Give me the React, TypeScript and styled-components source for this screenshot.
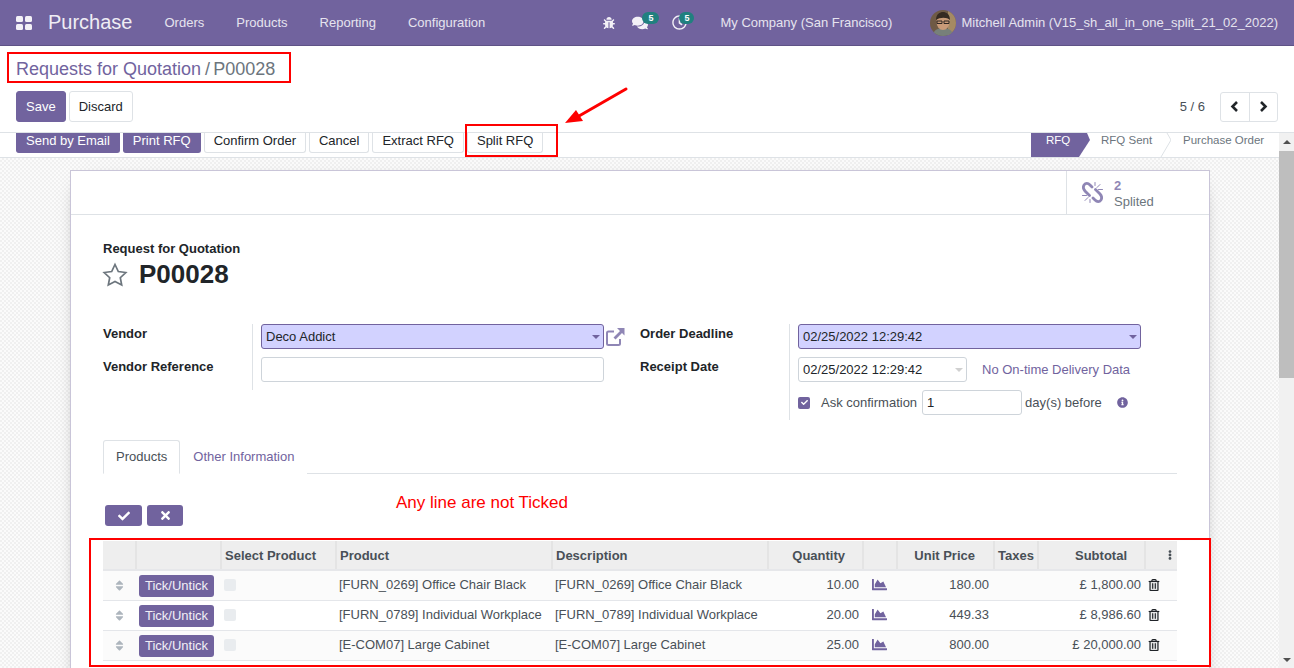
import * as React from 'react';
import styled, { createGlobalStyle } from 'styled-components';
import {
  FaBug,
  FaCheck,
  FaChartArea,
  FaComments,
  FaEllipsisV,
  FaInfoCircle,
  FaRegClock,
  FaRegTrashAlt,
  FaSort,
  FaTimes,
} from 'react-icons/fa';

const purple = '#71639e';

const GlobalStyle = createGlobalStyle`
  html, body {
    margin: 0;
    height: 100%;
    overflow: hidden;
  }
  body {
    font-family: "Liberation Sans", Arial, sans-serif;
    font-size: 13px;
    color: #212529;
  }
  * {
    box-sizing: border-box;
  }
`;

const Page = styled.div`
  position: relative;
  width: 1294px;
  height: 668px;
  display: flex;
  flex-direction: column;
  overflow: hidden;
`;

const NavBar = styled.header`
  flex: none;
  height: 46px;
  display: flex;
  align-items: center;
  background: ${purple};
  border-bottom: 1px solid #5f5386;
  color: #fff;
  padding-left: 16px;
  padding-right: 16px;
`;

const AppGrid = styled.div`
  display: grid;
  grid-template-columns: 7px 7px;
  grid-auto-rows: 6px;
  gap: 2px;
  margin-right: 16px;
  span {
    background: #f3f1f7;
    border-radius: 1.5px;
  }
`;

const Brand = styled.span`
  font-size: 20px;
  color: #efedf4;
  margin-right: 32px;
`;

const NavLink = styled.span`
  color: #e6e3ef;
  margin-right: 32px;
`;

const NavRight = styled.div`
  margin-left: auto;
  display: flex;
  align-items: center;
  color: #e6e3ef;
`;

const NavIcon = styled.span<{ $w: number }>`
  position: relative;
  width: ${(p) => p.$w}px;
  height: 16px;
  display: flex;
  align-items: center;
  color: #f3f1f7;
`;

const Badge = styled.span<{ $left: number; $w: number }>`
  position: absolute;
  top: -3px;
  left: ${(p) => p.$left}px;
  width: ${(p) => p.$w}px;
  height: 12px;
  border-radius: 6px;
  background: #21807f;
  color: #fff;
  font-size: 9px;
  font-weight: 700;
  text-align: center;
  line-height: 12px;
`;

const Company = styled.span`
  margin-right: 38px;
`;

const Avatar = styled.svg`
  width: 26px;
  height: 26px;
  border-radius: 50%;
  margin-right: 5px;
`;

const ControlPanel = styled.div`
  flex: none;
  height: 87px;
  background: #fff;
  border-bottom: 1px solid #dee2e6;
  padding: 11px 16px 0;
`;

const Breadcrumb = styled.div`
  font-size: 18px;
  line-height: 24px;
  height: 34px;
  color: ${purple};
  span {
    color: #6c757d;
  }
  i {
    font-style: normal;
    color: #6c757d;
    padding: 0 3px 0 4px;
  }
`;

const PanelRow = styled.div`
  display: flex;
  align-items: center;
`;

const Button = styled.button<{ $primary?: boolean }>`
  font: inherit;
  height: 31px;
  padding: 0 9px;
  border-radius: 3px;
  border: 1px solid ${(p) => (p.$primary ? purple : '#dee2e6')};
  background: ${(p) => (p.$primary ? purple : '#fff')};
  color: ${(p) => (p.$primary ? '#fff' : '#212529')};
  margin-right: 3px;
  white-space: nowrap;
`;

const PagerValue = styled.span`
  margin-left: auto;
  margin-right: 15px;
  color: #495057;
`;

const Pager = styled.div`
  display: flex;
  width: 58px;
  height: 30px;
  border: 1px solid #dee2e6;
  border-radius: 3px;
  color: #212529;
  span {
    flex: 1;
    display: flex;
    align-items: center;
    justify-content: center;
  }
  span + span {
    border-left: 1px solid #dee2e6;
  }
`;

const Chevron = styled.svg`
  width: 9px;
  height: 11px;
`;

const Body = styled.div`
  flex: 1;
  min-height: 0;
  display: flex;
`;

const MainColumn = styled.div`
  flex: 1;
  min-width: 0;
  display: flex;
  flex-direction: column;
`;

const StatusBar = styled.div`
  flex: none;
  height: 25px;
  display: flex;
  background: #fff;
  border-bottom: 1px solid #dee2e6;
  padding-left: 16px;
`;

const ActionButton = styled(Button)`
  height: 20px;
  border-top: 0;
  border-radius: 0 0 3px 3px;
  padding: 0 9px 6px;
  margin-right: 3px;
`;

const Steps = styled.div`
  margin-left: auto;
  display: flex;
  height: 24px;
  width: 248px;
  font-size: 11.5px;
`;

const StepItem = styled.div<{ $active?: boolean; $w: number; $pad: number }>`
  position: relative;
  isolation: isolate;
  flex: none;
  width: ${(p) => p.$w}px;
  padding-left: ${(p) => p.$pad}px;
  line-height: 14px;
  color: ${(p) => (p.$active ? '#fff' : '#6c757d')};
`;

const StepShape = styled.svg`
  position: absolute;
  top: 0;
  left: 0;
  width: 100%;
  height: 24px;
  z-index: -1;
`;

const Scroller = styled.main`
  flex: 1;
  min-height: 0;
  padding: 12px 0 0 70px;
  overflow: hidden;
  background-color: #f9f9f9;
  background-image: repeating-conic-gradient(#f0f0f0 0 25%, #fbfbfb 0 50%);
  background-size: 4px 4px;
`;

const ScrollBar = styled.div`
  flex: none;
  width: 15px;
  background: #f1f1f1;
  display: flex;
  flex-direction: column;
  align-items: center;
`;

const ScrollArrow = styled.div<{ $down?: boolean }>`
  flex: none;
  height: 17px;
  display: flex;
  align-items: center;
  justify-content: center;
  &::before {
    content: '';
    border-left: 4px solid transparent;
    border-right: 4px solid transparent;
    ${(p) => (p.$down ? 'border-top: 4px solid #505050;' : 'border-bottom: 4px solid #505050;')}
  }
`;

const ScrollThumb = styled.div`
  flex: none;
  width: 100%;
  height: 227px;
  margin-top: 1px;
  background: #bebebe;
`;

const ScrollSpace = styled.div`
  flex: 1;
`;

const Sheet = styled.section`
  width: 1140px;
  min-height: 560px;
  background: #fff;
  border: 1px solid #c9c5d8;
  box-shadow: 0 5px 20px -15px #000;
`;

const ButtonBox = styled.div`
  height: 44px;
  display: flex;
  justify-content: flex-end;
  border-bottom: 1px solid #dee2e6;
`;

const StatButton = styled.div`
  width: 143px;
  display: flex;
  align-items: center;
  padding-left: 15px;
  border-left: 1px solid #dee2e6;
  color: #8f86b5;
  line-height: 16px;
  b {
    display: block;
  }
  span {
    color: #6c757d;
  }
`;

const StatIcon = styled.svg`
  flex: none;
  width: 21px;
  height: 21px;
`;

const StatText = styled.div`
  margin-left: 11px;
  padding-top: 2px;
`;

const SheetBody = styled.div`
  padding: 26px 32px 0 32px;
`;

const TitleLabel = styled.div`
  font-weight: 700;
  line-height: 16px;
`;

const TitleRow = styled.div`
  display: flex;
  align-items: center;
  height: 33px;
  margin-top: 1px;
`;

const Star = styled.svg`
  width: 24px;
  height: 24px;
  overflow: visible;
`;

const TitleText = styled.h1`
  margin: 0 0 0 12px;
  font-size: 26px;
  font-weight: 700;
  color: #212529;
`;

const FormGrid = styled.div`
  display: flex;
  align-items: flex-start;
  margin-top: 33px;
`;

const FormLabels = styled.div<{ $w: number }>`
  width: ${(p) => p.$w}px;
  flex: none;
  font-weight: 700;
  div {
    height: 33px;
    line-height: 19px;
  }
`;

const FormFields = styled.div<{ $w: number; $bottom: number }>`
  width: ${(p) => p.$w}px;
  flex: none;
  border-left: 1px solid #dee2e6;
  padding: 0 0 ${(p) => p.$bottom}px 8px;
  display: flex;
  flex-direction: column;
  gap: 8px;
`;

const FieldRow = styled.div`
  display: flex;
  align-items: center;
`;

const Input = styled.div<{ $required?: boolean; $w: number; $caret?: boolean }>`
  position: relative;
  width: ${(p) => p.$w}px;
  height: 25px;
  line-height: 23px;
  padding-left: 4px;
  border-radius: 3px;
  border: 1px solid ${(p) => (p.$required ? purple : '#ced4da')};
  background: ${(p) => (p.$required ? '#d2d2ff' : '#fff')};
  &::after {
    content: ${(p) => (p.$caret ? "''" : 'none')};
    position: absolute;
    right: 3px;
    top: 10px;
    border-left: 4px solid transparent;
    border-right: 4px solid transparent;
    border-top: 4px solid ${(p) => (p.$required ? '#71639e' : '#d0d0d0')};
  }
`;

const LinkIcon = styled.svg`
  width: 20px;
  height: 20px;
  margin-left: 1px;
  color: #8f86b5;
`;

const DeliveryLink = styled.span`
  margin-left: 15px;
  color: ${purple};
`;

const CheckBox = styled.span`
  width: 12px;
  height: 12px;
  border-radius: 2px;
  background: ${purple};
  color: #fff;
  display: flex;
  align-items: center;
  justify-content: center;
  font-size: 7px;
`;

const AskLabel = styled.span`
  margin-left: 11px;
  margin-right: 5px;
  color: #495057;
`;

const DaysLabel = styled.span`
  margin-left: 3px;
  color: #495057;
`;

const InfoIcon = styled.span`
  margin-left: 15px;
  color: ${purple};
  display: flex;
  font-size: 11px;
`;

const Tabs = styled.nav`
  display: flex;
  height: 34px;
  margin-top: 20px;
  border-bottom: 1px solid #dee2e6;
`;

const Tab = styled.div<{ $active?: boolean }>`
  height: 34px;
  padding: 0 12px;
  line-height: 32px;
  color: ${(p) => (p.$active ? '#495057' : purple)};
  background: #fff;
  border: 1px solid ${(p) => (p.$active ? '#dee2e6' : 'transparent')};
  border-bottom: 1px solid ${(p) => (p.$active ? '#fff' : 'transparent')};
  border-radius: 3px 3px 0 0;
`;

const LineTools = styled.div`
  display: flex;
  gap: 5px;
  margin-top: 31px;
  margin-left: 2px;
`;

const ToolButton = styled.span<{ $w: number }>`
  width: ${(p) => p.$w}px;
  height: 21px;
  border-radius: 3px;
  background: ${purple};
  color: #fff;
  font-size: 12px;
  display: flex;
  align-items: center;
  justify-content: center;
`;

const Lines = styled.table`
  width: 1074px;
  margin-top: 15px;
  border-collapse: collapse;
  table-layout: fixed;
`;

const Th = styled.th<{ $right?: boolean; $pad?: number }>`
  height: 29px;
  padding: 0 ${(p) => p.$pad ?? 3}px 0 3px;
  background: #eeeeee;
  border-bottom: 2px solid #e6e7ea;
  border-right: 2px solid #e4e4e4;
  text-align: ${(p) => (p.$right ? 'right' : 'left')};
  color: #495057;
  font-weight: 700;
  white-space: nowrap;
  &:last-child {
    border-right: 0;
  }
`;

const Td = styled.td<{ $right?: boolean; $pad?: number; $top?: number }>`
  height: 30px;
  padding: ${(p) => p.$top ?? 6}px ${(p) => p.$pad ?? 3}px 0 3px;
  border-bottom: 1px solid #e4e6ea;
  text-align: ${(p) => (p.$right ? 'right' : 'left')};
  vertical-align: top;
  line-height: 15px;
  color: #495057;
  white-space: nowrap;
`;

const Row = styled.tr<{ $odd?: boolean }>`
  background: ${(p) => (p.$odd ? '#fbfbfb' : '#fff')};
`;

const Handle = styled.span`
  display: flex;
  justify-content: center;
  color: #adb5bd;
  font-size: 13px;
`;

const TickButton = styled.span`
  display: block;
  width: 75px;
  height: 22px;
  line-height: 22px;
  text-align: center;
  border-radius: 3px;
  background: ${purple};
  color: #f1eff6;
`;

const EmptyBox = styled.span`
  display: block;
  width: 12px;
  height: 12px;
  border-radius: 2px;
  background: #e9ecef;
`;

const ChartLink = styled.span`
  display: flex;
  color: ${purple};
  font-size: 15px;
  padding-left: 6px;
`;

const Trash = styled.span`
  display: flex;
  color: #212529;
  font-size: 12px;
`;

const RedBox = styled.div<{ $x: number; $y: number; $w: number; $h: number }>`
  position: absolute;
  left: ${(p) => p.$x}px;
  top: ${(p) => p.$y}px;
  width: ${(p) => p.$w}px;
  height: ${(p) => p.$h}px;
  border: 2px solid #fe0000;
  pointer-events: none;
`;

const Note = styled.div`
  position: absolute;
  left: 396px;
  top: 493px;
  font-size: 17px;
  line-height: 19px;
  color: #fe0000;
`;

const Arrow = styled.svg`
  position: absolute;
  left: 560px;
  top: 84px;
  width: 72px;
  height: 44px;
`;

const lines = [
  { code: '[FURN_0269] Office Chair Black', qty: '10.00', price: '180.00', total: '£ 1,800.00' },
  { code: '[FURN_0789] Individual Workplace', qty: '20.00', price: '449.33', total: '£ 8,986.60' },
  { code: '[E-COM07] Large Cabinet', qty: '25.00', price: '800.00', total: '£ 20,000.00' },
];

const colWidths = [33, 85, 115, 216, 216, 95, 34, 97, 44, 107, 32];

export default function App() {
  return (
    <Page>
      <GlobalStyle />
      <NavBar>
        <AppGrid>
          <span />
          <span />
          <span />
          <span />
        </AppGrid>
        <Brand>Purchase</Brand>
        <NavLink>Orders</NavLink>
        <NavLink>Products</NavLink>
        <NavLink>Reporting</NavLink>
        <NavLink>Configuration</NavLink>
        <NavRight>
          <NavIcon $w={29}>
            <FaBug size={12} />
          </NavIcon>
          <NavIcon $w={40}>
            <FaComments size={16} />
            <Badge $left={10} $w={17}>
              5
            </Badge>
          </NavIcon>
          <NavIcon $w={48}>
            <FaRegClock size={15} />
            <Badge $left={7} $w={15}>
              5
            </Badge>
          </NavIcon>
          <Company>My Company (San Francisco)</Company>
          <Avatar viewBox="0 0 26 26">
            <rect width="26" height="26" fill="#6f5a45" />
            <rect x="18" width="8" height="26" fill="#a58a63" />
            <path d="M3 26c0-6 5-8 10-8s10 2 10 8z" fill="#77807a" />
            <ellipse cx="13" cy="12" rx="6.5" ry="8" fill="#c89a78" />
            <path d="M6 10c0-6 4-8 7-8s7 2 7 8c-3-3-10-3-14 0z" fill="#352a22" />
            <path d="M7 11h5v2.5H7zM14 11h5v2.5h-5z" fill="none" stroke="#2d2622" strokeWidth="1" />
          </Avatar>
          <span>Mitchell Admin (V15_sh_all_in_one_split_21_02_2022)</span>
        </NavRight>
      </NavBar>

      <ControlPanel>
        <Breadcrumb>
          Requests for Quotation<i>/</i>
          <span>P00028</span>
        </Breadcrumb>
        <PanelRow>
          <Button $primary>Save</Button>
          <Button>Discard</Button>
          <PagerValue>5 / 6</PagerValue>
          <Pager>
            <span>
              <Chevron viewBox="0 0 9 11">
                <polyline points="7,1 2.5,5.5 7,10" fill="none" stroke="currentColor" strokeWidth="2.6" />
              </Chevron>
            </span>
            <span>
              <Chevron viewBox="0 0 9 11">
                <polyline points="2,1 6.5,5.5 2,10" fill="none" stroke="currentColor" strokeWidth="2.6" />
              </Chevron>
            </span>
          </Pager>
        </PanelRow>
      </ControlPanel>

      <Body>
        <MainColumn>
          <StatusBar>
            <ActionButton $primary>Send by Email</ActionButton>
            <ActionButton $primary>Print RFQ</ActionButton>
            <ActionButton>Confirm Order</ActionButton>
            <ActionButton>Cancel</ActionButton>
            <ActionButton>Extract RFQ</ActionButton>
            <ActionButton>Split RFQ</ActionButton>
            <Steps>
              <StepItem $active $w={59} $pad={15}>
                <StepShape viewBox="0 0 59 24">
                  <polygon points="0,0 56,0 59,7 48,24 0,24" fill={purple} />
                </StepShape>
                RFQ
              </StepItem>
              <StepItem $w={81} $pad={11}>
                <StepShape viewBox="0 0 81 24">
                  <polyline points="77,0 81,7 71,24" fill="none" stroke="#dee2e6" />
                </StepShape>
                RFQ Sent
              </StepItem>
              <StepItem $w={108} $pad={12}>
                Purchase Order
              </StepItem>
            </Steps>
          </StatusBar>
          <Scroller>
            <Sheet>
              <ButtonBox>
                <StatButton>
                  <StatIcon viewBox="0 0 21 21">
                    <g fill="none" stroke="currentColor" strokeLinecap="round">
                      <path
                        d="M10 5L8 3C6 1 3.5 1 2.2 2.8 1 4.6 1.2 7 3 9L7.5 13.5M11 16l2 2c2 2 4.5 2 5.8.2 1.2-1.8 1-4.2-.8-6.2L13.5 7.5"
                        strokeWidth="2.8"
                      />
                      <path
                        d="M13 3.5V.5M15 5.5l3-3M16.5 7.5H20.5M8 17.5v3M6 15.5l-3 3M4.5 13.5H.5"
                        strokeWidth="1"
                      />
                    </g>
                  </StatIcon>
                  <StatText>
                    <b>2</b>
                    <span>Splited</span>
                  </StatText>
                </StatButton>
              </ButtonBox>
              <SheetBody>
                <TitleLabel>Request for Quotation</TitleLabel>
                <TitleRow>
                  <Star viewBox="0 0 24 24">
                    <polygon
                      points="12,1.5 15.3,8.5 22.8,9.5 17.3,14.7 18.7,22 12,18.5 5.3,22 6.7,14.7 1.2,9.5 8.7,8.5"
                      fill="none"
                      stroke="#6c757d"
                      strokeWidth="1.7"
                    />
                  </Star>
                  <TitleText>P00028</TitleText>
                </TitleRow>
                <FormGrid>
                  <FormLabels $w={149}>
                    <div>Vendor</div>
                    <div>Vendor Reference</div>
                  </FormLabels>
                  <FormFields $w={388} $bottom={8}>
                    <FieldRow>
                      <Input $required $caret $w={343}>
                        Deco Addict
                      </Input>
                      <LinkIcon viewBox="0 0 20 20">
                        <path
                          d="M9 4.5H3.5A1.5 1.5 0 0 0 2 6v10.5A1.5 1.5 0 0 0 3.5 18h10a1.5 1.5 0 0 0 1.5-1.5V12"
                          fill="none"
                          stroke="currentColor"
                          strokeWidth="2"
                        />
                        <path d="M12 1h7.5v7.5l-2.5-2.5-6.5 6.5-2-2L15 4z" fill="currentColor" />
                      </LinkIcon>
                    </FieldRow>
                    <FieldRow>
                      <Input $w={343} />
                    </FieldRow>
                  </FormFields>
                  <FormLabels $w={149}>
                    <div>Order Deadline</div>
                    <div>Receipt Date</div>
                  </FormLabels>
                  <FormFields $w={360} $bottom={5}>
                    <FieldRow>
                      <Input $required $caret $w={343}>
                        02/25/2022 12:29:42
                      </Input>
                    </FieldRow>
                    <FieldRow>
                      <Input $caret $w={169}>
                        02/25/2022 12:29:42
                      </Input>
                      <DeliveryLink>No On-time Delivery Data</DeliveryLink>
                    </FieldRow>
                    <FieldRow>
                      <CheckBox>
                        <FaCheck />
                      </CheckBox>
                      <AskLabel>Ask confirmation</AskLabel>
                      <Input $w={100}>1</Input>
                      <DaysLabel>day(s) before</DaysLabel>
                      <InfoIcon>
                        <FaInfoCircle />
                      </InfoIcon>
                    </FieldRow>
                  </FormFields>
                </FormGrid>
                <Tabs>
                  <Tab $active>Products</Tab>
                  <Tab>Other Information</Tab>
                </Tabs>
                <LineTools>
                  <ToolButton $w={37}>
                    <FaCheck />
                  </ToolButton>
                  <ToolButton $w={36}>
                    <FaTimes size={13} />
                  </ToolButton>
                </LineTools>
                <Lines>
                  <colgroup>
                    {colWidths.map((w, i) => (
                      <col key={i} width={w} />
                    ))}
                  </colgroup>
                  <thead>
                    <tr>
                      <Th />
                      <Th />
                      <Th>Select Product</Th>
                      <Th>Product</Th>
                      <Th>Description</Th>
                      <Th $right $pad={17}>
                        Quantity
                      </Th>
                      <Th />
                      <Th $right $pad={18}>
                        Unit Price
                      </Th>
                      <Th>Taxes</Th>
                      <Th $right $pad={17}>
                        Subtotal
                      </Th>
                      <Th $right $pad={2}>
                        <FaEllipsisV size={10} />
                      </Th>
                    </tr>
                  </thead>
                  <tbody>
                    {lines.map((line, i) => (
                      <Row key={line.code} $odd={i !== 1}>
                        <Td $top={8}>
                          <Handle>
                            <FaSort />
                          </Handle>
                        </Td>
                        <Td $top={4}>
                          <TickButton>Tick/Untick</TickButton>
                        </Td>
                        <Td $top={8}>
                          <EmptyBox />
                        </Td>
                        <Td>{line.code}</Td>
                        <Td>{line.code}</Td>
                        <Td $right $pad={4}>
                          {line.qty}
                        </Td>
                        <Td>
                          <ChartLink>
                            <FaChartArea />
                          </ChartLink>
                        </Td>
                        <Td $right $pad={5}>
                          {line.price}
                        </Td>
                        <Td />
                        <Td $right $pad={4}>
                          {line.total}
                        </Td>
                        <Td $top={8}>
                          <Trash>
                            <FaRegTrashAlt stroke="currentColor" strokeWidth={8} />
                          </Trash>
                        </Td>
                      </Row>
                    ))}
                  </tbody>
                </Lines>
              </SheetBody>
            </Sheet>
          </Scroller>
        </MainColumn>
        <ScrollBar>
          <ScrollArrow />
          <ScrollThumb />
          <ScrollSpace />
          <ScrollArrow $down />
        </ScrollBar>
      </Body>

      <RedBox $x={7} $y={52} $w={284} $h={31} />
      <RedBox $x={465} $y={124} $w={93} $h={33} />
      <RedBox $x={89} $y={538} $w={1122} $h={129} />
      <Arrow viewBox="0 0 72 44">
        <path d="M66 5 L19 32" stroke="#fe0000" strokeWidth="3" strokeLinecap="round" />
        <polygon points="5,39 16,26 23,37" fill="#fe0000" />
      </Arrow>
      <Note>Any line are not Ticked</Note>
    </Page>
  );
}
